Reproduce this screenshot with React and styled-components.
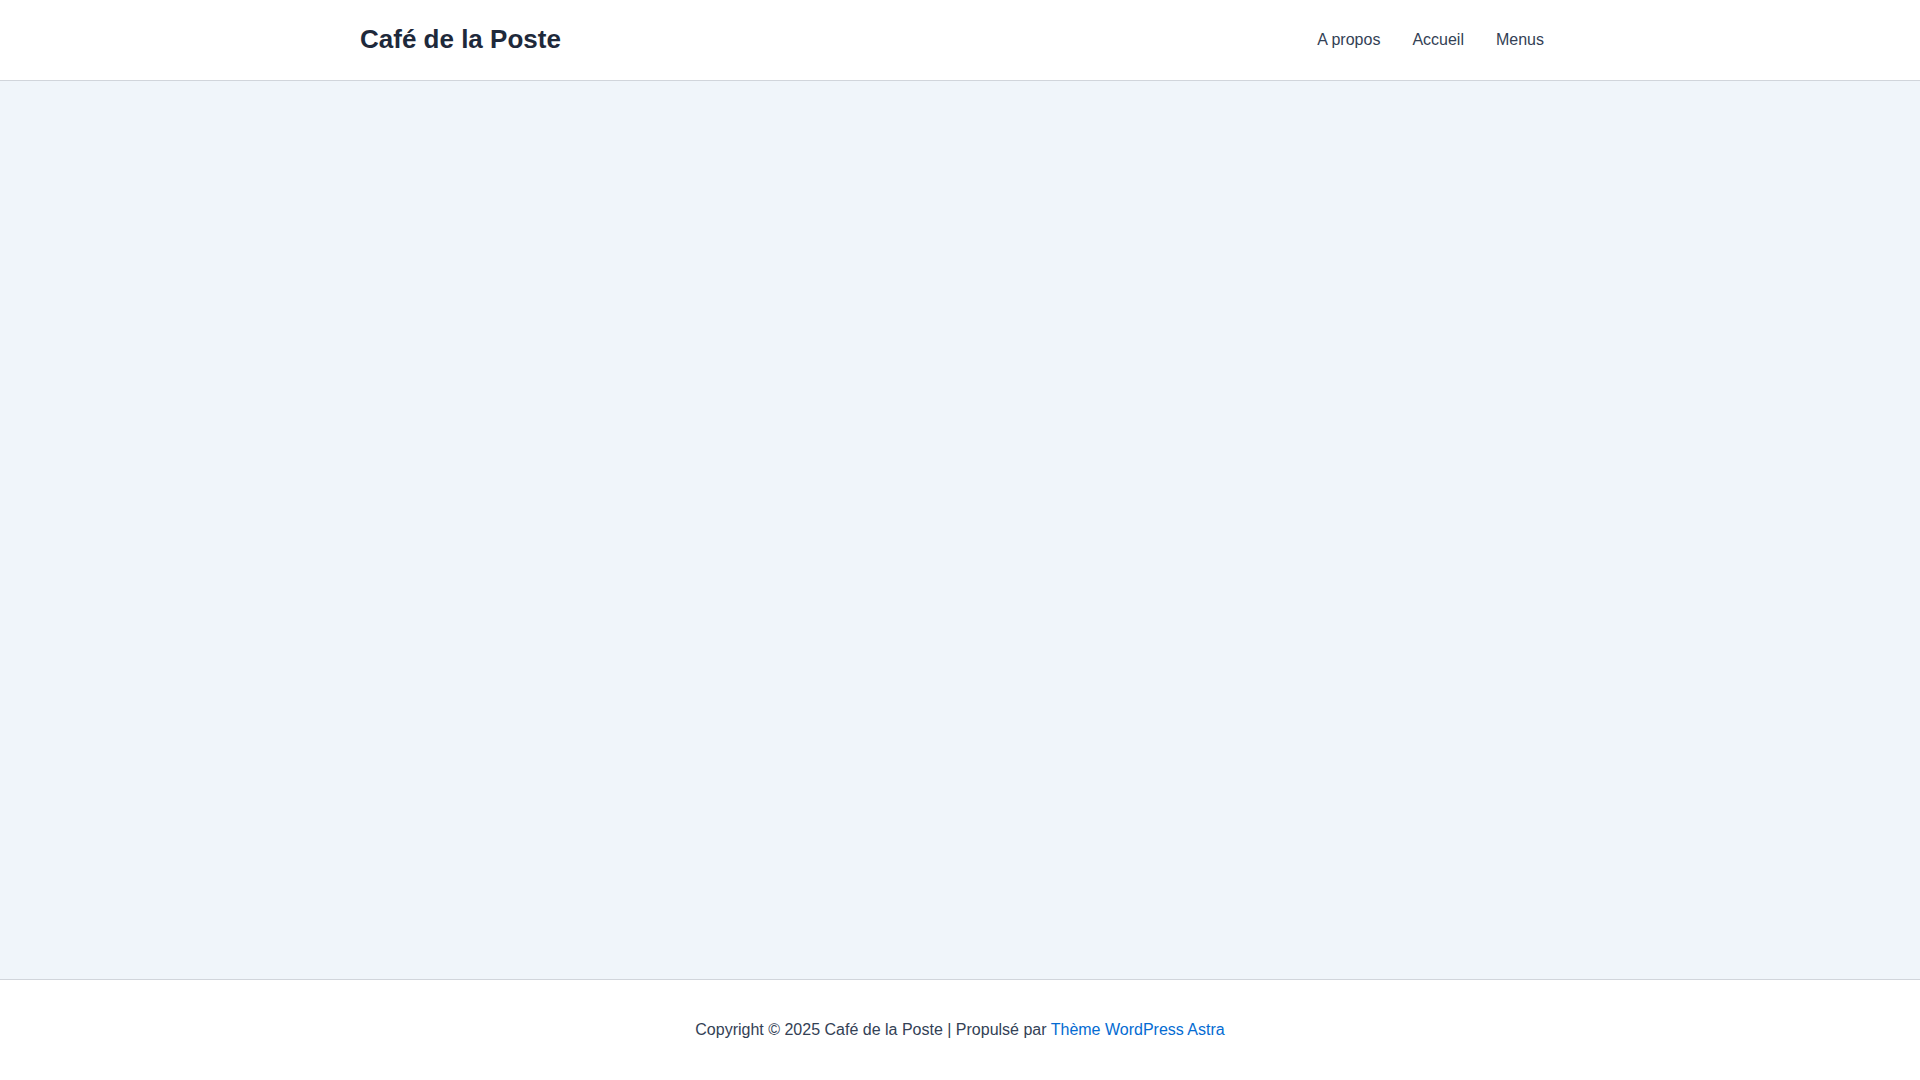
import React from 'react';
import styled, { createGlobalStyle } from 'styled-components';

const GlobalStyle = createGlobalStyle`
  html, body {
    margin: 0;
    padding: 0;
  }
  body {
    font-family: "Liberation Sans", Arial, sans-serif;
    color: #334155;
    background-color: #f0f5fa;
  }
  * {
    box-sizing: border-box;
  }
`;

const Page = styled.div`
  display: flex;
  flex-direction: column;
  min-height: 100vh;
`;

const Header = styled.header`
  background-color: #ffffff;
  border-bottom: 1px solid #d1d5db;
`;

const HeaderInner = styled.div`
  max-width: 1200px;
  height: 80px;
  margin: 0 auto;
  display: flex;
  align-items: center;
  justify-content: space-between;
`;

const SiteTitle = styled.a`
  font-size: 26px;
  font-weight: 700;
  line-height: 1.2;
  color: #1e293b;
  text-decoration: none;
`;

const Nav = styled.nav`
  display: flex;
  align-items: center;
  height: 100%;
`;

const NavLink = styled.a`
  display: flex;
  align-items: center;
  height: 100%;
  padding: 0 16px;
  font-size: 16px;
  color: #334155;
  text-decoration: none;
`;

const Main = styled.main`
  flex: 1;
  background-color: #f0f5fa;
`;

const Footer = styled.footer`
  background-color: #ffffff;
  border-top: 1px solid #d1d5db;
  height: 101px;
  display: flex;
  align-items: center;
  justify-content: center;
`;

const Copyright = styled.p`
  margin: 0;
  font-size: 16px;
  line-height: 1.6;
  color: #334155;
`;

const FooterLink = styled.a`
  color: #046bd2;
  text-decoration: none;
`;

const menu = ['A propos', 'Accueil', 'Menus'];

const App = () => {
  return (
    <Page>
      <GlobalStyle />
      <Header>
        <HeaderInner>
          <SiteTitle href="#">Café de la Poste</SiteTitle>
          <Nav>
            {menu.map((item) => (
              <NavLink key={item} href="#">
                {item}
              </NavLink>
            ))}
          </Nav>
        </HeaderInner>
      </Header>
      <Main />
      <Footer>
        <Copyright>
          Copyright © 2025 Café de la Poste | Propulsé par{' '}
          <FooterLink href="#">Thème WordPress Astra</FooterLink>
        </Copyright>
      </Footer>
    </Page>
  );
};

export default App;
